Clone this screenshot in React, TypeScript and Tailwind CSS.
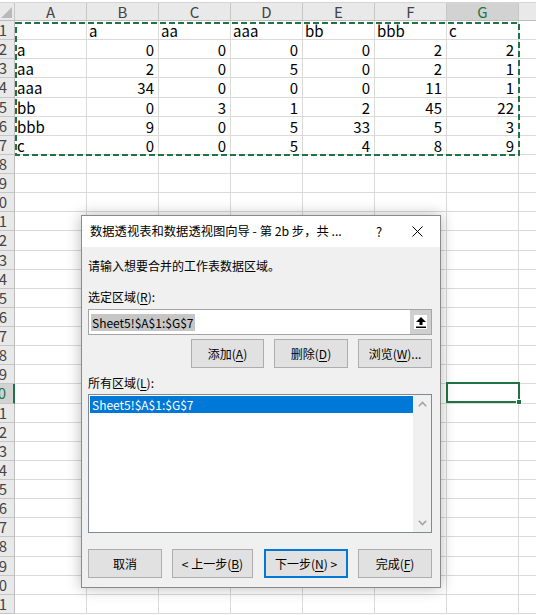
import React from 'react';

const COLS = ['A', 'B', 'C', 'D', 'E', 'F', 'G', 'H'];

// A1:G7 data, first column is text, the rest numbers (except header row)
const DATA: string[][] = [
  ['', 'a', 'aa', 'aaa', 'bb', 'bbb', 'c'],
  ['a', '0', '0', '0', '0', '2', '2'],
  ['aa', '2', '0', '5', '0', '2', '1'],
  ['aaa', '34', '0', '0', '0', '11', '1'],
  ['bb', '0', '3', '1', '2', '45', '22'],
  ['bbb', '9', '0', '5', '33', '5', '3'],
  ['c', '0', '0', '5', '4', '8', '9'],
];

const ROWS = Array.from({ length: 31 }, (_, i) => i + 1);

function Mn({ children }: { children: React.ReactNode }) {
  return <span className="underline underline-offset-2">{children}</span>;
}

function DlgButton({
  className,
  children,
  primary,
}: {
  className: string;
  children: React.ReactNode;
  primary?: boolean;
}) {
  return (
    <div
      className={
        'flex h-[29px] items-center justify-center bg-[#e1e1e1] text-[12px] text-black ' +
        (primary ? 'border-2 border-[#0078d7] ' : 'border border-[#adadad] ') +
        className
      }
    >
      {children}
    </div>
  );
}

function Sheet() {
  return (
    <div className="flex flex-col">
      {/* formula bar edge */}
      <div className="h-[3px] border-b border-[#d5d5d5] bg-white" />
      {/* column headers */}
      <div className="flex h-[18px] border-b border-[#bdbdbd] bg-[#e9e9e9]">
        <div className="relative w-[15px] shrink-0 border-r border-[#c6c6c6]">
          <svg className="absolute right-[2px] bottom-[2px]" width="11" height="11" viewBox="0 0 11 11">
            <polygon points="11,0 11,11 0,11" fill="#b9b9b9" />
          </svg>
        </div>
        {COLS.map((c) => (
          <div
            key={c}
            className={
              'flex w-[72px] shrink-0 items-center justify-center border-r border-[#c6c6c6] text-[15px] leading-none ' +
              (c === 'G' ? 'bg-[#d2d2d2] text-[#217346]' : 'text-[#444]')
            }
          >
            {c === 'H' ? '' : c}
          </div>
        ))}
      </div>
      {ROWS.map((r) => (
        <div key={r} className="flex h-[19.13px]">
          <div
            className={
              'w-[15px] shrink-0 overflow-x-clip border-b border-[#c6c6c6] text-[15px] leading-[18px] whitespace-nowrap ' +
              (r === 20
                ? 'border-r-2 border-r-[#217346] bg-[#d2d2d2] text-[#217346]'
                : 'border-r border-r-[#bdbdbd] bg-[#e9e9e9] text-[#444]')
            }
          >
            <div className="flex justify-end pr-[7px]">{r}</div>
          </div>
          {COLS.map((c, ci) => {
            const v = r <= 7 && ci < 7 ? DATA[r - 1][ci] : '';
            const num = r > 1 && ci > 0;
            return (
              <div
                key={c}
                className={
                  'w-[72px] shrink-0 border-r border-b border-[#dadada] px-[2px] pt-[2px] text-[15px] leading-[16px] whitespace-nowrap text-black ' +
                  (num ? 'pr-[4px] text-right' : '')
                }
              >
                {v}
              </div>
            );
          })}
        </div>
      ))}
    </div>
  );
}

function Dialog() {
  return (
    <div className="absolute top-[215px] left-[81px] flex h-[373px] w-[360px] flex-col border border-[#8a8a8a] bg-[#f0f0f0] shadow-[0_0_14px_rgba(0,0,0,0.28)]">
      {/* title bar */}
      <div className="flex h-[31px] shrink-0 items-center bg-white text-[12.3px] text-black">
        <div className="flex-1 pl-[8px] whitespace-nowrap">数据透视表和数据透视图向导 - 第 2b 步，共 ...</div>
        <div className="flex w-[30px] justify-center text-[13px]">?</div>
        <div className="flex w-[46px] justify-center">
          <svg width="11" height="11" viewBox="0 0 11 11">
            <path d="M0.5 0.5 L10.5 10.5 M10.5 0.5 L0.5 10.5" stroke="#000" strokeWidth="1" />
          </svg>
        </div>
      </div>

      {/* body */}
      <div className="flex flex-col pr-[8px] pl-[6px] text-[12px] text-black">
        <div className="mt-[11px] h-[16px] leading-[16px]">请输入想要合并的工作表数据区域。</div>
        <div className="mt-[15px] h-[16px] leading-[16px]">
          选定区域(<Mn>R</Mn>):
        </div>

        {/* range input */}
        <div className="mt-[4px] flex h-[26px] border border-[#a5a5a5] bg-white">
          <div className="flex flex-1 items-center pl-[2px]">
            <span className="bg-[#c6c6c6] px-[1px] leading-[17px]">Sheet5!$A$1:$G$7</span>
          </div>
          <div className="flex w-[21px] items-center justify-center bg-[#cfcfcf]">
            <div className="flex h-[14px] w-[13px] items-center justify-center bg-white">
              <svg width="10" height="11" viewBox="0 0 10 11">
                <polygon points="5,0 10,5 6.5,5 6.5,8 3.5,8 3.5,5 0,5" fill="#000" />
                <rect x="0" y="9.5" width="10" height="1.5" fill="#000" />
              </svg>
            </div>
          </div>
        </div>

        <div className="mt-[4px] flex justify-end gap-[10px]">
          <DlgButton className="w-[73px]">
            添加(<Mn>A</Mn>)
          </DlgButton>
          <DlgButton className="w-[74px]">
            删除(<Mn>D</Mn>)
          </DlgButton>
          <DlgButton className="w-[74px]">
            浏览(<Mn>W</Mn>)...
          </DlgButton>
        </div>

        <div className="mt-[7px] h-[16px] leading-[16px]">
          所有区域(<Mn>L</Mn>):
        </div>

        {/* list box */}
        <div className="mt-[3px] flex h-[139px] border border-[#828790] bg-white">
          <div className="flex-1 pt-[1px] pl-[1px]">
            <div className="h-[17px] bg-[#0078d7] pl-[2px] leading-[17px] text-white">Sheet5!$A$1:$G$7</div>
          </div>
          <div className="flex w-[18px] flex-col items-center justify-between bg-[#f0f0f0] py-[6px]">
            <svg width="9" height="6" viewBox="0 0 9 6">
              <path d="M0.8 5.2 L4.5 1.5 L8.2 5.2" fill="none" stroke="#a3a3a3" strokeWidth="1.6" />
            </svg>
            <svg width="9" height="6" viewBox="0 0 9 6">
              <path d="M0.8 0.8 L4.5 4.5 L8.2 0.8" fill="none" stroke="#a3a3a3" strokeWidth="1.6" />
            </svg>
          </div>
        </div>

        <div className="mt-[16px] flex items-center">
          <DlgButton className="w-[74px]">取消</DlgButton>
          <DlgButton className="ml-[10px] w-[81px]">
            &lt; 上一步(<Mn>B</Mn>)
          </DlgButton>
          <DlgButton className="ml-[11px] w-[84px]" primary>
            下一步(<Mn>N</Mn>) &gt;
          </DlgButton>
          <DlgButton className="ml-[10px] w-[74px]">
            完成(<Mn>F</Mn>)
          </DlgButton>
        </div>
      </div>
    </div>
  );
}

export default function App() {
  return (
    <div
      className="relative h-[615px] w-[536px] overflow-hidden bg-white"
      style={{ fontFamily: '"Noto Sans CJK SC", "Noto Sans", sans-serif' }}
    >
      <Sheet />

      {/* copy marquee around A1:G7 */}
      <svg className="pointer-events-none absolute top-[21px] left-[14px]" width="507" height="136">
        <rect x="2" y="2" width="503" height="132" fill="none" stroke="#217346" strokeWidth="2" strokeDasharray="6 3" />
      </svg>

      {/* active cell G20 */}
      <div className="pointer-events-none absolute top-[382px] left-[446px] h-[21px] w-[74px] border-2 border-[#217346]">
        <div className="absolute -right-[4px] -bottom-[4px] h-[6px] w-[6px] border border-white bg-[#217346]" />
      </div>

      <Dialog />
    </div>
  );
}
